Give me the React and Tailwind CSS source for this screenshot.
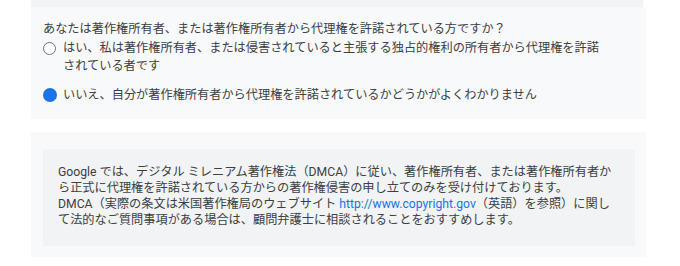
export default function App() {
  const font = { fontFamily: 'Roboto, "Noto Sans CJK JP", sans-serif' };
  return (
    <div className="w-[680px] h-[266px] bg-white overflow-hidden text-[#3c4043]" style={font}>
      <div className="ml-[31px] w-[612px] h-[7px] bg-[#f1f3f4]" />
      <div className="ml-[31px] w-[615px] h-[112px] bg-[#f8f9fa] pl-[12px] pt-[13px] text-[12.2px] leading-[18px]">
        <div className="whitespace-nowrap">あなたは著作権所有者、または著作権所有者から代理権を許諾されている方ですか？</div>
        <div className="flex mt-[1px]">
          <div className="w-[20px] shrink-0 pt-[3px]">
            <div className="w-[13px] h-[13px] rounded-full border border-[#70757a] bg-white" />
          </div>
          <div className="whitespace-nowrap">
            はい、私は著作権所有者、または侵害されていると主張する独占的権利の所有者から代理権を許諾
            <br />
            されている者です
          </div>
        </div>
        <div className="flex mt-[11px]">
          <div className="w-[20px] shrink-0 pt-[2px]">
            <div className="w-[14px] h-[14px] rounded-full bg-[#1a73e8]" />
          </div>
          <div className="whitespace-nowrap">いいえ、自分が著作権所有者から代理権を許諾されているかどうかがよくわかりません</div>
        </div>
      </div>
      <div className="h-[13px]" />
      <div className="ml-[31px] w-[615px] h-[125px] bg-[#f8f9fa] pl-[12px] pr-[11px] pt-[17px]">
        <div className="h-[97px] bg-[#f1f3f4] pl-[15px] pt-[15px] text-[12.2px] leading-[16px] whitespace-nowrap">
          Google では、デジタル ミレニアム著作権法（DMCA）に従い、著作権所有者、または著作権所有者か
          <br />
          ら正式に代理権を許諾されている方からの著作権侵害の申し立てのみを受け付けております。
          <br />
          DMCA（実際の条文は米国著作権局のウェブサイト <span className="text-[#1a73e8]">http://www.copyright.gov</span>（英語）を参照）に関し
          <br />
          て法的なご質問事項がある場合は、顧問弁護士に相談されることをおすすめします。
        </div>
      </div>
    </div>
  );
}
